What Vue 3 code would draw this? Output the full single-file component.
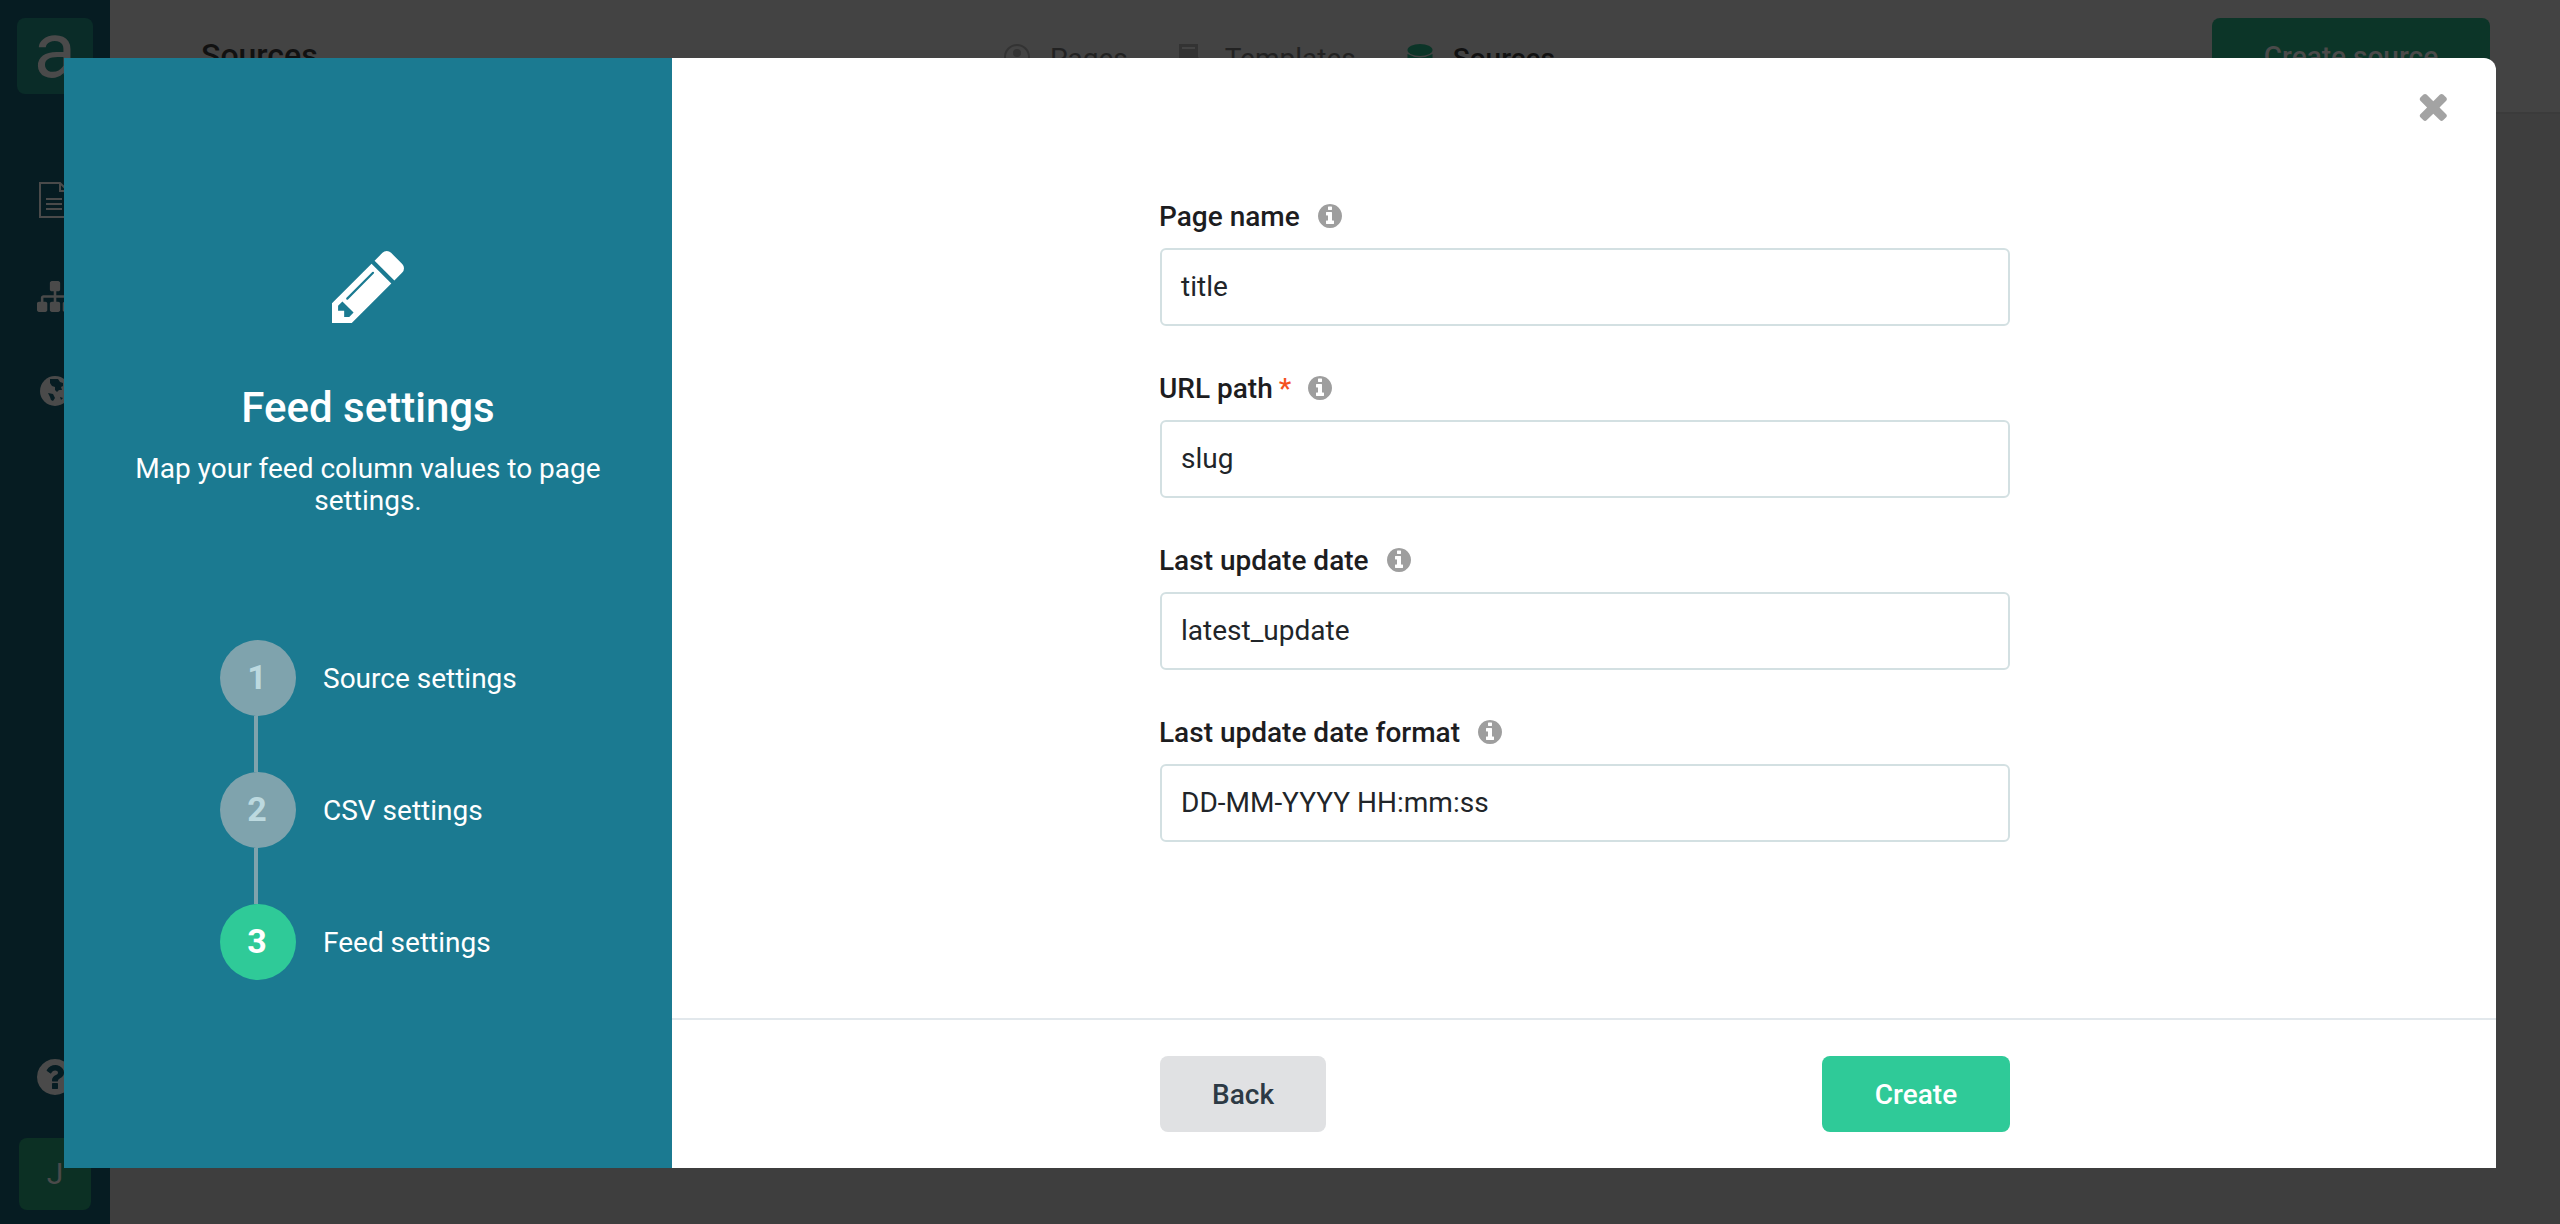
<script setup>
const fields = [
  { label: 'Page name', value: 'title' },
  { label: 'URL path', value: 'slug', required: true },
  { label: 'Last update date', value: 'latest_update' },
  { label: 'Last update date format', value: 'DD-MM-YYYY HH:mm:ss' },
]
const steps = [
  { n: 1, label: 'Source settings' },
  { n: 2, label: 'CSV settings' },
  { n: 3, label: 'Feed settings', active: true },
]
const infoPath = 'M1152 1376v-160q0-14-9-23t-23-9h-96v-512q0-14-9-23t-23-9h-320q-14 0-23 9t-9 23v160q0 14 9 23t23 9h96v320h-96q-14 0-23 9t-9 23v160q0 14 9 23t23 9h448q14 0 23-9t9-23zm-128-896v-160q0-14-9-23t-23-9h-192q-14 0-23 9t-9 23v160q0 14 9 23t23 9h192q14 0 23-9t9-23zm640 416q0 209-103 385.5t-279.5 279.5-385.5 103-385.5-103-279.5-279.5-103-385.5 103-385.5 279.5-279.5 385.5-103 385.5 103 279.5 279.5 103 385.5z'
</script>

<template>
  <div class="page">
    <aside class="rail">
      <div class="logo">a</div>
      <nav class="rail-icons">
        <svg class="doc" viewBox="0 0 30 36" width="30" height="36" fill="none" stroke="#4a4a4a" stroke-width="2">
          <path d="M1 1h20l8 8v26H1z" />
          <path d="M21 1v8h8M7 17h16M7 22h16M7 27h16" />
        </svg>
        <svg class="sitemap" viewBox="0 128 1792 1536" width="36" height="31" fill="#4a4a4a">
          <path d="M1792 1248v320q0 40-28 68t-68 28h-320q-40 0-68-28t-28-68v-320q0-40 28-68t68-28h96v-192h-512v192h96q40 0 68 28t28 68v320q0 40-28 68t-68 28h-320q-40 0-68-28t-28-68v-320q0-40 28-68t68-28h96v-192h-512v192h96q40 0 68 28t28 68v320q0 40-28 68t-68 28h-320q-40 0-68-28t-28-68v-320q0-40 28-68t68-28h96v-192q0-52 38-90t90-38h512v-192h-96q-40 0-68-28t-28-68v-320q0-40 28-68t68-28h320q40 0 68 28t28 68v320q0 40-28 68t-68 28h-96v192h512q52 0 90 38t38 90v192h96q40 0 68 28t28 68z" />
        </svg>
        <svg class="globe" viewBox="0 0 30 30" width="30" height="30">
          <circle cx="15" cy="15" r="15" fill="#4a4a4a" />
          <path d="M10 3l8 0 2 3 3 1 0 3-2 1 1 3-3 0-2 2-2-2 0-3-3-1-2-3zM8 17l5 1 2 4-2 3-2-1-1-3zM20 21l3 1-2 2z" fill="#071d23" />
        </svg>
      </nav>
      <svg class="help" viewBox="128 128 1536 1536" width="36" height="36" fill="#4a4a4a">
        <path d="M1024 1376v-192q0-14-9-23t-23-9h-192q-14 0-23 9t-9 23v192q0 14 9 23t23 9h192q14 0 23-9t9-23zm256-672q0-88-55.5-163t-138.5-116-170-41q-243 0-371 213-15 24 8 42l132 100q7 6 19 6 16 0 25-12 53-68 86-92 34-24 86-24 48 0 85.5 26t37.5 59q0 38-20 61t-68 45q-63 28-115.5 86.5t-52.5 125.5v36q0 14 9 23t23 9h192q14 0 23-9t9-23q0-19 21.5-49.5t54.5-49.5q32-18 49-28.5t46-35 44.5-48 28-60.5 12.5-81zm384 192q0 209-103 385.5t-279.5 279.5-385.5 103-385.5-103-279.5-279.5-103-385.5 103-385.5 279.5-279.5 385.5-103 385.5 103 279.5 279.5 103 385.5z" />
      </svg>
      <div class="avatar">J</div>
    </aside>

    <div class="content">
      <header class="topbar">
        <div class="heading">Sources</div>
        <nav class="tabs">
          <span class="tab">
            <svg viewBox="0 0 26 26" width="26" height="26"><circle cx="13" cy="13" r="12" fill="none" stroke="#333" stroke-width="2" /><circle cx="13" cy="9" r="4" fill="#333" /></svg>
            Pages
          </span>
          <span class="tab tab-next">
            <svg viewBox="0 0 26 26" width="26" height="26"><path d="M0 0h19v13l6 7-5 6H0z" fill="#333" /><path d="M3 4h13" stroke="#444" stroke-width="2" /></svg>
            Templates
          </span>
          <span class="tab tab-next tab-current">
            <svg viewBox="0 0 26 26" width="26" height="26"><ellipse cx="13" cy="6" rx="12.500" ry="6" fill="#0c3528" /><path d="M.5 10q12.500 7 25 0v8q-12.500 7-25 0z" fill="#0c3528" /></svg>
            Sources
          </span>
        </nav>
        <button class="create-source" type="button">Create source</button>
      </header>
    </div>

    <section class="modal">
      <aside class="wizard">
        <svg class="pencil" viewBox="128 128 1536 1536" width="73" height="73" fill="#fff">
          <path d="M491 1536l91-91-235-235-91 91v107h128v128h107zm523-928q0-22-22-22-10 0-17 7l-542 542q-7 7-7 17 0 22 22 22 10 0 17-7l542-542q7-7 7-17zm-54-192l416 416-832 832h-416v-416zm683 96q0 53-37 90l-166 166-416-416 166-165q36-38 90-38 53 0 91 38l235 234q37 39 37 91z" />
        </svg>
        <h1 class="wizard-title">Feed settings</h1>
        <p class="wizard-text">Map your feed column values to page settings.</p>
        <ol class="steps">
          <li v-for="s in steps" :key="s.n" class="step" :class="{ active: s.active }">
            <span class="bubble">{{ s.n }}</span>
            <span class="step-label">{{ s.label }}</span>
          </li>
        </ol>
      </aside>

      <div class="panel">
        <svg class="close" viewBox="188 240 1302 1314" width="30" height="30" fill="#a3a3a3">
          <path d="M1490 1322q0 40-28 68l-136 136q-28 28-68 28t-68-28l-294-294-294 294q-28 28-68 28t-68-28l-136-136q-28-28-28-68t28-68l294-294-294-294q-28-28-28-68t28-68l136-136q28-28 68-28t68 28l294 294 294-294q28-28 68-28t68 28l136 136q28 28 28 68t-28 68l-294 294 294 294q28 28 28 68z" />
        </svg>
        <form class="form" @submit.prevent>
          <div v-for="f in fields" :key="f.label" class="field">
            <div class="label-row">
              <span class="label">{{ f.label }}</span>
              <span v-if="f.required" class="req">*</span>
              <svg class="info" viewBox="128 128 1536 1536" width="24" height="24" fill="#9e9e9e"><path :d="infoPath" /></svg>
            </div>
            <div class="input">{{ f.value }}</div>
          </div>
        </form>
        <footer class="footer">
          <button class="btn back" type="button">Back</button>
          <button class="btn create" type="button">Create</button>
        </footer>
      </div>
    </section>
  </div>
</template>

<style scoped>
.page {
  position: relative;
  width: 2560px;
  height: 1224px;
  display: flex;
  overflow: hidden;
  background: #3e3e3e;
  font-family: Roboto, "Liberation Sans", sans-serif;
}
.rail {
  width: 110px;
  flex: none;
  background: #061c22;
  display: flex;
  flex-direction: column;
  align-items: center;
  padding-top: 18px;
  box-sizing: border-box;
}
.logo {
  width: 76px;
  height: 76px;
  border-radius: 8px;
  background: #0a2c28;
  color: #4a4a4a;
  font-size: 78px;
  line-height: 66px;
  text-align: center;
}
.rail-icons {
  display: flex;
  flex-direction: column;
  align-items: center;
  margin-top: 88px;
}
.doc { margin-left: -2px; }
.sitemap { margin-top: 63px; }
.globe { margin-top: 64px; margin-left: -1px; }
.help { margin-top: 653px; }
.avatar {
  width: 72px;
  height: 72px;
  margin-top: 43px;
  border-radius: 8px;
  background: #0c3024;
  color: #4a4a4a;
  font-size: 30px;
  line-height: 72px;
  text-align: center;
}
.content { flex: 1; }
.topbar {
  height: 114px;
  box-sizing: border-box;
  padding: 18px 70px 0 91px;
  background: #434343;
  border-bottom: 2px solid #3b3b3b;
  display: grid;
  grid-template-columns: 803px 1fr 278px;
  color: #111;
}
.heading {
  font-size: 32px;
  font-weight: 500;
  line-height: 40px;
  margin-top: 17px;
}
.tabs {
  display: flex;
  font-size: 28px;
  color: #222;
  margin-top: 26px;
}
.tab { display: flex; gap: 20px; height: 30px; line-height: 30px; }
.tab svg { flex: none; }
.tab-next { margin-left: 51px; }
.tab-current { font-weight: 500; color: #111; }
.create-source {
  height: 76px;
  border: 0;
  border-radius: 8px;
  background: #0c3528;
  color: #4a4a4a;
  font: 500 28px Roboto, sans-serif;
}

.modal {
  position: absolute;
  left: 64px;
  top: 58px;
  width: 2432px;
  height: 1110px;
  display: flex;
  background: #fff;
  border-radius: 0 12px 0 0;
  overflow: hidden;
}
.wizard {
  width: 608px;
  flex: none;
  background: #1b7a91;
  color: #fff;
  display: flex;
  flex-direction: column;
  align-items: center;
  padding-top: 192px;
  box-sizing: border-box;
}
.pencil { display: block; }
.wizard-title {
  margin: 62px 0 0;
  font-size: 42px;
  font-weight: 500;
  line-height: 45px;
}
.wizard-text {
  margin: 23px 0 0;
  width: 490px;
  font-size: 28px;
  line-height: 32px;
  text-align: center;
}
.steps {
  list-style: none;
  margin: 123px 0 0;
  padding: 0 0 0 156px;
  align-self: stretch;
  display: flex;
  flex-direction: column;
  gap: 56px;
}
.step {
  position: relative;
  display: flex;
  align-items: center;
  gap: 27px;
  height: 76px;
}
.step:not(:last-child)::after {
  content: "";
  position: absolute;
  left: 34px;
  top: 76px;
  width: 4px;
  height: 56px;
  background: #7fa3ad;
}
.bubble {
  width: 76px;
  height: 76px;
  border-radius: 50%;
  background: #7fa3ad;
  color: #bcd9df;
  font-size: 34px;
  font-weight: 700;
  line-height: 74px;
  text-align: center;
  text-indent: -2px;
}
.step.active .bubble {
  background: #2fca98;
  color: #fff;
}
.step-label { font-size: 28px; }

.panel {
  position: relative;
  flex: 1;
  display: flex;
  flex-direction: column;
}
.close {
  position: absolute;
  right: 49px;
  top: 33px;
}
.form {
  flex: 1;
  width: 850px;
  margin-left: 488px;
  padding-top: 142px;
  box-sizing: border-box;
}
.field { margin-bottom: 46px; }
.label-row {
  display: flex;
  align-items: center;
  height: 32px;
  margin-bottom: 16px;
  margin-left: -1px;
}
.label {
  font-size: 28px;
  font-weight: 500;
  color: #1d1d1f;
  line-height: 32px;
  padding-top: 1px;
}
.req {
  color: #f4511e;
  font-size: 28px;
  font-weight: 500;
  margin-left: 6px;
  margin-right: -1px;
}
.info { margin-left: 18px; flex: none; }
.input {
  height: 78px;
  box-sizing: border-box;
  border: 2px solid #d3e0e2;
  border-radius: 6px;
  padding: 0 19px;
  font-size: 28px;
  line-height: 74px;
  color: #212529;
}
.footer {
  flex: none;
  height: 150px;
  box-sizing: border-box;
  border-top: 2px solid #e2e8ec;
  padding: 36px 486px 0 488px;
  display: flex;
  justify-content: space-between;
  align-items: flex-start;
}
.btn {
  height: 76px;
  border: 0;
  border-radius: 8px;
  font: 500 28px Roboto, sans-serif;
}
.back { width: 166px; background: #e0e1e3; color: #2d3a45; }
.create { width: 188px; background: #2fca98; color: #fff; }
</style>
